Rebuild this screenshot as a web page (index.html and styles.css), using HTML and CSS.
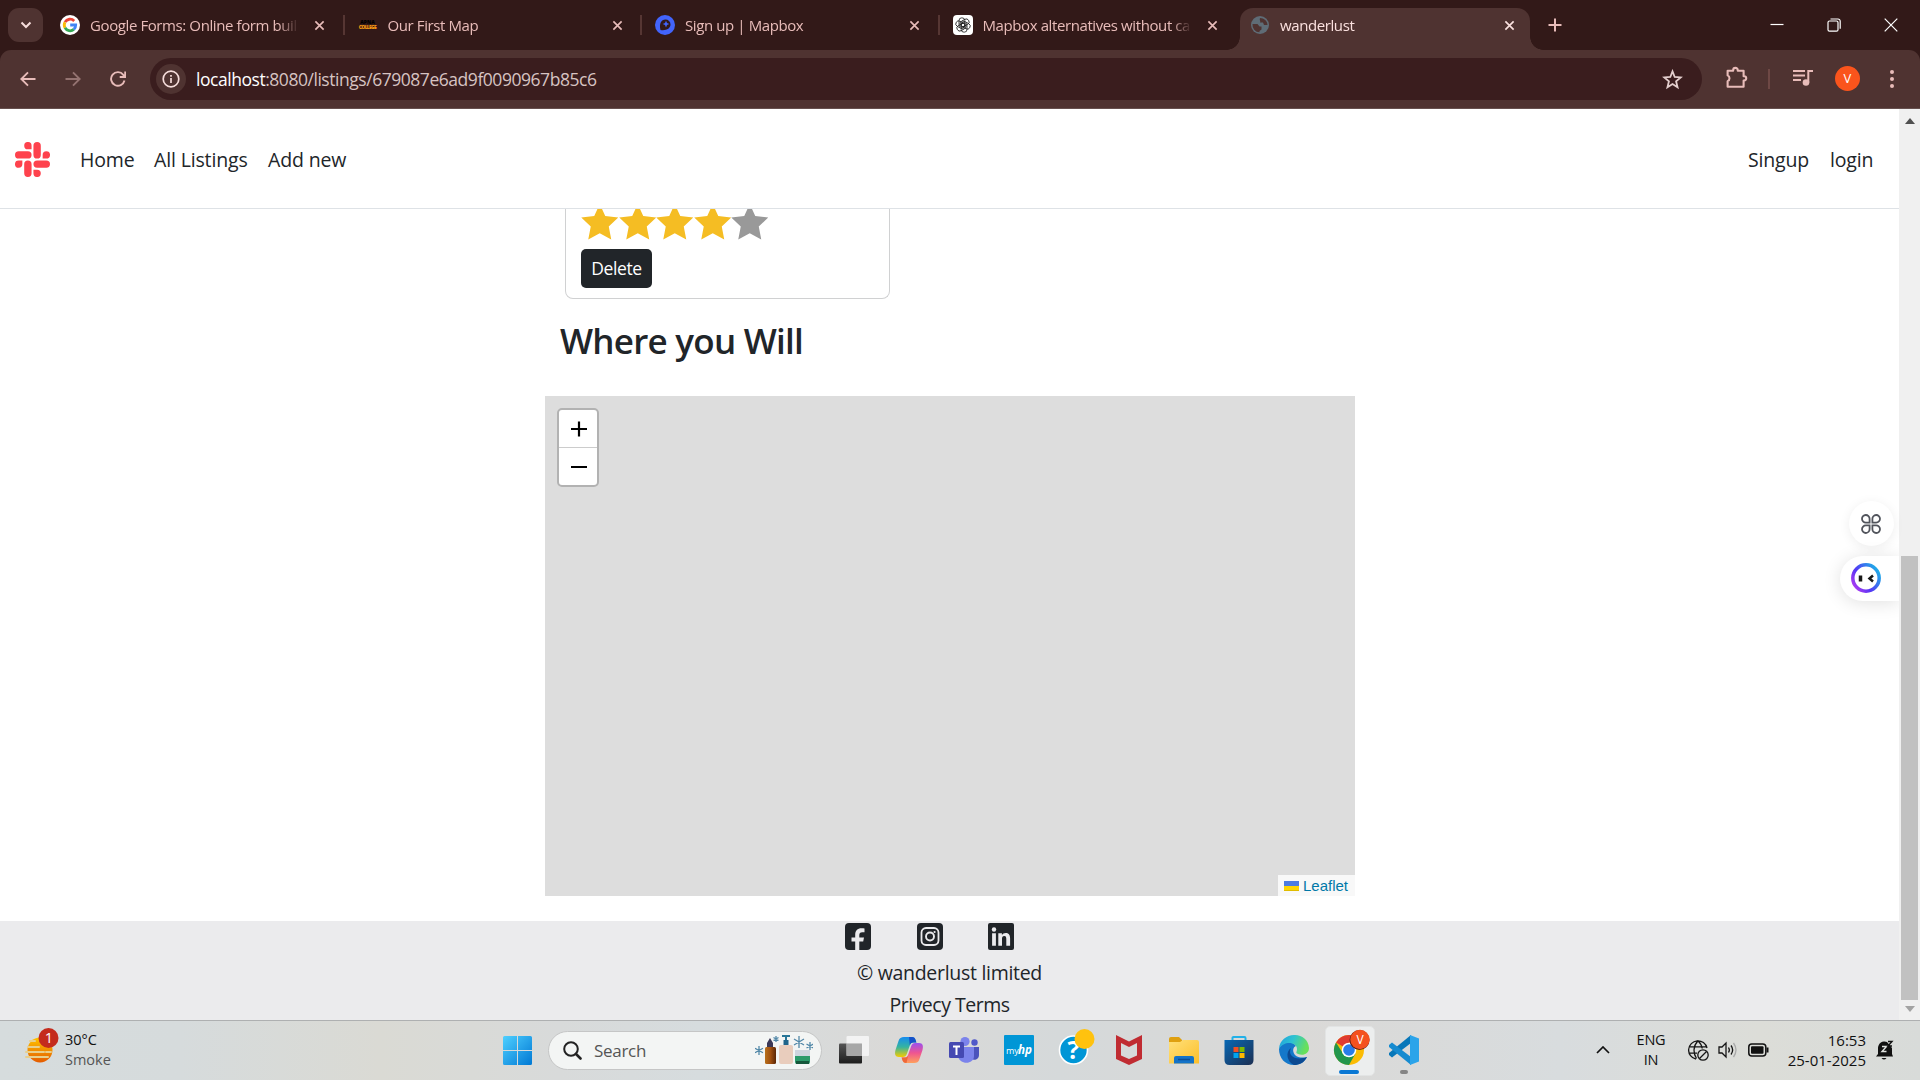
FILE: index.html
```html
<!DOCTYPE html>
<html lang="en">
<head>
<meta charset="utf-8">
<title>wanderlust</title>
<link rel="stylesheet" href="styles.css">
</head>
<body>
<svg width="0" height="0" class="defs">
  <defs>
    <symbol id="x" viewBox="0 0 12 12"><path d="M1.5 1.5l9 9M10.5 1.5l-9 9" fill="none" stroke="currentColor" stroke-width="1.8"/></symbol>
    <symbol id="star" viewBox="0 0 37 36"><path d="M18.5 0l5.5 12 13 1.5-9.500 9 2.500 13-11.500-6.300-11.500 6.300 2.500-13L0 13.500 13 12z" fill="currentColor"/></symbol>
    <linearGradient id="win" x1="0" y1="0" x2="1" y2="1"><stop offset="0" stop-color="#4fd0ff"/><stop offset="1" stop-color="#0078d4"/></linearGradient>
    <linearGradient id="sun" x1="0" y1="0" x2="0" y2="1"><stop offset="0" stop-color="#ffc400"/><stop offset="1" stop-color="#e45b00"/></linearGradient>
    <linearGradient id="ring" x1="0" y1="1" x2="1" y2="0.300"><stop offset="0" stop-color="#c43cf0"/><stop offset="0.450" stop-color="#5636f5"/><stop offset="1" stop-color="#20a8e8"/></linearGradient>
    <linearGradient id="cop1" x1="0" y1="0" x2="0" y2="1"><stop offset="0" stop-color="#168cf0"/><stop offset="0.500" stop-color="#35b4a0"/><stop offset="1" stop-color="#f5cc00"/></linearGradient>
    <linearGradient id="cop2" x1="0" y1="0" x2="0" y2="1"><stop offset="0" stop-color="#9b50ef"/><stop offset="0.500" stop-color="#ef5590"/><stop offset="1" stop-color="#ffa05c"/></linearGradient>
    <linearGradient id="fold" x1="0" y1="0" x2="1" y2="1"><stop offset="0" stop-color="#ffe07a"/><stop offset="1" stop-color="#fcbf2a"/></linearGradient>
    <linearGradient id="store" x1="0" y1="0" x2="1" y2="1"><stop offset="0" stop-color="#0868b4"/><stop offset="1" stop-color="#1c2f52"/></linearGradient>
    <linearGradient id="edge" x1="0" y1="0" x2="1" y2="0.300"><stop offset="0" stop-color="#1fa0e0"/><stop offset="0.500" stop-color="#2fc3d0"/><stop offset="1" stop-color="#68e05a"/></linearGradient>
    <linearGradient id="amber" x1="0" y1="0" x2="1" y2="0"><stop offset="0" stop-color="#b8701c"/><stop offset="0.500" stop-color="#a05010"/><stop offset="1" stop-color="#5a2606"/></linearGradient>
    <linearGradient id="dark" x1="0" y1="0" x2="0" y2="1"><stop offset="0" stop-color="#555"/><stop offset="1" stop-color="#1c1c1c"/></linearGradient>
  </defs>
</svg>

<header class="browser">
  <div class="tabs">
    <button class="tab-search"><svg width="12" height="8" viewBox="0 0 12 8"><path d="M1.500 1.500L6 6l4.500-4.500" fill="none" stroke="currentColor" stroke-width="2"/></svg></button>
    <div class="tab first">
      <svg class="fav" viewBox="0 0 20 20"><circle cx="10" cy="10" r="10" fill="#fff"/><g fill="none" stroke-width="2.800"><path d="M14.200 5.900A5.800 5.800 0 0 0 5 7.200" stroke="#ea4335"/><path d="M5 7.200a5.800 5.800 0 0 0 0 5.600" stroke="#fbbc05"/><path d="M5 12.800a5.800 5.800 0 0 0 8.800 1.600" stroke="#34a853"/><path d="M13.800 14.400A5.800 5.800 0 0 0 15.700 10H10.200" stroke="#4285f4"/></g></svg>
      <span class="tab-title">Google Forms: Online form buil</span>
      <svg class="close"><use href="#x"/></svg>
    </div>
    <div class="tab">
      <span class="fav apna"><b>APNA</b><i>COLLEGE</i></span>
      <span class="tab-title">Our First Map</span>
      <svg class="close"><use href="#x"/></svg>
    </div>
    <div class="tab">
      <svg class="fav" viewBox="0 0 20 20"><circle cx="10" cy="10" r="10" fill="#4264fb"/><path d="M5.500 15C4 9 6 4.500 10.500 4.500a5 5 0 0 1 5 5C15.500 13.500 11 16 5.500 15z" fill="#321918"/><path d="M11 5.800l1 2.300 2.300 1-2.300 1-1 2.300-1-2.300-2.300-1 2.300-1z" fill="#4264fb"/></svg>
      <span class="tab-title">Sign up | Mapbox</span>
      <svg class="close"><use href="#x"/></svg>
    </div>
    <div class="tab last">
      <svg class="fav" viewBox="0 0 20 20"><rect width="20" height="20" rx="4" fill="#fff"/><g fill="none" stroke="#222" stroke-width=".85"><rect x="6" y="2.800" width="5.800" height="9.500" rx="2.800"/><rect x="6" y="2.800" width="5.800" height="9.500" rx="2.800" transform="rotate(60 10 10)"/><rect x="6" y="2.800" width="5.800" height="9.500" rx="2.800" transform="rotate(120 10 10)"/><rect x="6" y="2.800" width="5.800" height="9.500" rx="2.800" transform="rotate(180 10 10)"/><rect x="6" y="2.800" width="5.800" height="9.500" rx="2.800" transform="rotate(240 10 10)"/><rect x="6" y="2.800" width="5.800" height="9.500" rx="2.800" transform="rotate(300 10 10)"/></g></svg>
      <span class="tab-title">Mapbox alternatives without ca</span>
      <svg class="close"><use href="#x"/></svg>
    </div>
    <div class="tab active">
      <svg class="fav" viewBox="0 0 20 20"><circle cx="10" cy="10" r="9" fill="#5f6c76"/><path d="M2.500 9h5l2 2.500h2v3l-2 1.500v1.300A7.500 7.500 0 0 1 2.500 9zM10 3c-1 2 1 3 0 4.500h3l1 2.500h3.500C17.500 6 14 3 10 3z" fill="#4f3331"/></svg>
      <span class="tab-title">wanderlust</span>
      <svg class="close"><use href="#x"/></svg>
    </div>
    <svg class="new-tab" viewBox="0 0 14 14"><path d="M7 0.500v13M.5 7h13" fill="none" stroke="currentColor" stroke-width="2"/></svg>
    <div class="window-controls">
      <svg width="14" height="14" viewBox="0 0 14 14"><path d="M.5 6.500h13" stroke="#fff" stroke-width="1.200"/></svg>
      <svg width="14" height="14" viewBox="0 0 14 14" fill="none" stroke="#fff" stroke-width="1.200"><rect x="1" y="3" width="10" height="10.200" rx="1.500"/><path d="M3.500 1H11a2.200 2.200 0 0 1 2.200 2.200v7.500"/></svg>
      <svg width="14" height="14" viewBox="0 0 14 14"><path d="M.7.700l12.600 12.600M13.300.700L.7 13.300" stroke="#fff" stroke-width="1.200"/></svg>
    </div>
  </div>
  <div class="toolbar">
    <svg class="nav-icon" viewBox="0 0 16 16"><path d="M15.500 8H1.500M8 1.300L1.300 8 8 14.700" fill="none" stroke="currentColor" stroke-width="1.900"/></svg>
    <svg class="nav-icon off" viewBox="0 0 16 16"><path d="M.5 8h14M8 1.300L14.700 8 8 14.700" fill="none" stroke="currentColor" stroke-width="1.900"/></svg>
    <svg class="nav-icon" viewBox="0 0 16 16"><path d="M14.500 9.500A6.800 6.800 0 1 1 13.300 3.800L15 5.800M15.200.500v5.500H9.700" fill="none" stroke="currentColor" stroke-width="1.900"/></svg>
    <div class="omnibox">
      <span class="site-info"><svg width="18" height="18" viewBox="0 0 18 18"><circle cx="9" cy="9" r="7.800" fill="none" stroke="currentColor" stroke-width="1.700"/><path d="M9 8v5M9 5v1.800" stroke="currentColor" stroke-width="1.700"/></svg></span>
      <span class="url"><b>localhost</b>:8080/listings/679087e6ad9f0090967b85c6</span>
      <svg class="bookmark" viewBox="0 0 20 20"><path d="M10 2.200l2.100 5.400 5.700.400-4.400 3.700 1.400 5.700-4.800-3.100-4.800 3.100 1.400-5.700L2.200 8l5.700-.400z" fill="none" stroke="currentColor" stroke-width="1.700"/></svg>
    </div>
    <svg class="extension" viewBox="0 0 22 22"><path d="M2.500 4.500h5.300V4a2.200 2.200 0 0 1 4.400 0v.5h5.600v5.300h.5a2 2 0 0 1 0 4h-.5v6H2.500v-5.300a3 3 0 0 0 0-5.500z" fill="none" stroke="currentColor" stroke-width="2" stroke-linejoin="round"/></svg>
    <span class="divider"></span>
    <svg class="media" viewBox="0 0 20 18"><path d="M0 2h12M0 6.500h12M0 11h8" stroke="currentColor" stroke-width="1.900"/><circle cx="13" cy="13.500" r="3.300" fill="currentColor"/><path d="M15.300 13.500V2H20" fill="none" stroke="currentColor" stroke-width="2"/></svg>
    <span class="avatar">V</span>
    <svg class="menu" viewBox="0 0 4 18" fill="currentColor"><circle cx="2" cy="2" r="2"/><circle cx="2" cy="9" r="2"/><circle cx="2" cy="16" r="2"/></svg>
  </div>
</header>

<main class="viewport">
  <div class="page">
    <nav class="navbar">
      <svg class="brand" viewBox="0 0 448 448" fill="#fe424d"><path d="M94.100 283.100a47.100 47.100 0 1 1-47-47.100h47zM117.800 283.100a47.100 47.100 0 0 1 94.200 0v117.800a47.100 47.100 0 0 1-94.200 0zM164.900 94.100a47.100 47.100 0 1 1 47.100-47v47zM164.900 117.800a47.100 47.100 0 0 1 0 94.200H47.100a47.100 47.100 0 0 1 0-94.200zM353.900 164.900a47.100 47.100 0 1 1 47 47.100h-47zM330.200 164.900a47.100 47.100 0 0 1-94.200 0V47.100a47.100 47.100 0 0 1 94.200 0zM283.100 353.900a47.100 47.100 0 1 1-47.100 47v-47zM283.100 330.200a47.100 47.100 0 0 1 0-94.200h117.800a47.100 47.100 0 0 1 0 94.200z"/></svg>
      <a class="n1">Home</a><a class="n2">All Listings</a><a class="n3">Add new</a>
      <a class="n4">Singup</a><a class="n5">login</a>
    </nav>
    <section class="content">
      <div class="review">
        <div class="stars"><svg><use href="#star"/></svg><svg><use href="#star"/></svg><svg><use href="#star"/></svg><svg><use href="#star"/></svg><svg class="empty"><use href="#star"/></svg></div>
        <button class="delete"><span>Delete</span></button>
      </div>
      <h3><span>Where you Will</span></h3>
      <div class="map">
        <div class="zoom">
          <a><svg width="16" height="16" viewBox="0 0 16 16"><path d="M0 8h16M8 0.500v15" stroke="#000" stroke-width="2.200"/></svg></a>
          <a><svg width="16" height="16" viewBox="0 0 16 16"><path d="M0 8h16" stroke="#000" stroke-width="2"/></svg></a>
        </div>
        <div class="attribution"><svg width="15" height="10" viewBox="0 0 15 10"><path fill="#4c7be1" d="M0 0h15v5H0z"/><path fill="#ffd500" d="M0 5h15v4H0z"/><path fill="#e0bc00" d="M0 9h15v1H0z"/></svg><span>Leaflet</span></div>
      </div>
    </section>
    <footer class="footer">
      <div class="social">
        <svg viewBox="0 0 26 27"><rect width="26" height="27" rx="4" fill="#212529"/><path d="M10.200 27v-8.500H6.500v-4h3.700v-2.300c0-4.700 2.200-6.900 6.300-6.900 1.200 0 2.300.100 3 .300v3.600h-2.200c-2.200 0-3 .900-3 3v2.300h4.700l-.8 4h-3.900V27z" fill="#ebebed"/></svg>
        <svg viewBox="0 0 26 27"><rect width="26" height="27" rx="4" fill="#212529"/><rect x="4.500" y="5" width="17" height="17" rx="4.500" fill="none" stroke="#ebebed" stroke-width="1.800"/><circle cx="13" cy="13.500" r="4" fill="none" stroke="#ebebed" stroke-width="1.900"/><circle cx="17.600" cy="9" r="1.100" fill="#ebebed"/></svg>
        <svg viewBox="0 0 26 27"><rect width="26" height="27" rx="2" fill="#212529"/><circle cx="6" cy="6.500" r="2.200" fill="#ebebed"/><path d="M4.100 10.300h3.800v12.500H4.100zM10.300 10.300h3.600V12c.8-1.300 2.100-2 3.800-2 3.700 0 4.400 2.500 4.400 5.600v7.200h-3.800v-6.400c0-1.500-.1-3.300-2-3.300-2.100 0-2.300 1.600-2.300 3.200v6.500h-3.700z" fill="#ebebed"/></svg>
      </div>
      <p class="f1"><span>© wanderlust limited</span></p>
      <p class="f2"><span>Privecy Terms</span></p>
    </footer>
    <div class="clover"><svg width="20" height="20" viewBox="0 0 20 20" fill="none" stroke="#51545c" stroke-width="1.800"><path d="M8.600 8.600H5a3.800 3.800 0 1 1 3.600-3.800zM11.400 8.600V5a3.800 3.800 0 1 1 3.800 3.600zM8.600 11.400V15a3.800 3.800 0 1 1-3.800-3.600zM11.400 11.400H15a3.800 3.800 0 1 1-3.600 3.800z"/></svg></div>
    <div class="bot"><svg width="30" height="30" viewBox="0 0 30 30"><circle cx="15" cy="15" r="13.200" fill="#fff" stroke="url(#ring)" stroke-width="3.500"/><path d="M9.500 12.500v6" stroke="#181818" stroke-width="3.500"/><path d="M22 12.500l-3.500 3 3.500 3" fill="none" stroke="#181818" stroke-width="2.500"/></svg></div>
  </div>
  <div class="scrollbar"><svg width="10" height="6" viewBox="0 0 10 6"><path d="M5 0l5 6H0z" fill="#505050"/></svg><div class="thumb"></div><svg width="10" height="6" viewBox="0 0 10 6"><path d="M5 6l5-6H0z" fill="#a3a3a3"/></svg></div>
</main>

<footer class="taskbar">
  <div class="weather">
    <svg width="36" height="36" viewBox="0 0 36 36"><circle cx="16" cy="22" r="12.500" fill="url(#sun)"/><g stroke="#e8cf8c" stroke-width="2" stroke-linecap="round"><path d="M6 13h5M4 19h11M2 24h18M22 24h5M2 29h22"/></g><circle cx="24.500" cy="10" r="10" fill="#c42b1c"/><text x="25" y="15.300" text-anchor="middle" font-size="14.500" fill="#fff">1</text></svg>
    <div><span class="w1">30°C</span><span class="w2">Smoke</span></div>
  </div>
  <svg class="start" viewBox="0 0 29 29"><path d="M0 1.500Q0 0 1.500 0H14v14H0zM15 0h12.500Q29 0 29 1.500V14H15zM0 15h14v14H1.500Q0 29 0 27.500zM15 15h14v12.500q0 1.500-1.500 1.500H15z" fill="url(#win)"/></svg>
  <div class="search">
    <svg width="19" height="19" viewBox="0 0 19 19"><circle cx="8" cy="8" r="6.800" fill="none" stroke="#222" stroke-width="2"/><path d="M13 13l4.500 4.500" stroke="#222" stroke-width="2.600" stroke-linecap="round"/></svg>
    <span>Search</span>
    <svg class="art" width="58" height="30" viewBox="0 0 58 30"><g stroke="#5288a8" stroke-width="1.300"><path d="M4 11v9M0 13.300l8 4.500M0 17.800l8-4.500M21 1v6M18.500 2.500l5 3M18.500 5.500l5-3M44 1v12M39 4l10 6M39 10l10-6M55 7v8M51.500 9l7 4M51.500 13l7-4"/></g><path d="M15 3l3 5v4h-6V8z" fill="#3b3856"/><rect x="10" y="12" width="11" height="17" rx="1.500" fill="url(#amber)"/><path d="M27 1h8M31 1v4" stroke="#287698" stroke-width="2"/><path d="M28.500 5h5v5h-5z" fill="#20658b"/><rect x="24" y="10" width="14" height="19" rx="2" fill="#e9cdbd"/><rect x="40" y="15" width="15" height="14" rx="2" fill="#2d9a6b"/><path d="M40 15h15v6H40z" fill="#cfd5df"/><path d="M41 26h13v3H41z" fill="#15573b"/></svg>
  </div>
  <div class="apps">
    <svg viewBox="0 0 30 30"><rect y="8.500" width="23" height="20" rx="1" fill="url(#dark)"/><rect x="7.500" y="1" width="22.500" height="20" rx="1" fill="#f6f6f6" opacity=".88"/><path d="M7.500 8.500H23V21H7.500z" fill="#999" opacity=".8"/></svg>
    <svg viewBox="0 0 30 30"><path d="M10 2h8c2 0 3 1 3.600 3l.8 2.500h-3c-2 0-3 1-3.600 3l-3 8.500c-.8 2-1.800 3-3.800 3H5C1 22 .5 19 1.500 15L4.500 6C5.500 3 7 2 10 2z" fill="url(#cop1)"/><path d="M20 28h-8c-2 0-3-1-3.600-3l-.8-2.500h3c2 0 3-1 3.600-3l3-8.500c.8-2 1.800-3 3.800-3h4c4 0 4.500 3 3.500 7l-3 9c-1 3-2.500 4-5.500 4z" fill="url(#cop2)"/><path d="M15 2h3c2 0 3 1 3.600 3l.8 2.500h-3c-2 0-3 1-3.600 3z" fill="#1652c8"/><path d="M7.600 22.500H11c1.500 0 2.500-.5 3.200-2L12.500 28C10 28 9 27 8.400 25z" fill="#ef6838"/></svg>
    <svg viewBox="0 0 30 30"><circle cx="16" cy="6.500" r="4.600" fill="#7b83eb"/><circle cx="25.500" cy="7.500" r="3.200" fill="#5059c9"/><path d="M21 12h9v8c0 4-4 6-8 4z" fill="#4b53bc"/><path d="M8 12h17v9c0 9-15 9-16 0z" fill="#7b83eb"/><rect y="7" width="15" height="16" rx="1.500" fill="#4549b2"/><path d="M4 11.500h7M7.500 11.500V20" stroke="#fff" stroke-width="2"/></svg>
    <svg viewBox="0 0 30 30"><rect width="30" height="30" rx="1" fill="#0096d6"/><text x="2" y="18.500" fill="#fff" font-size="9">my</text><text x="14" y="19" fill="#fff" font-size="13" font-weight="bold" font-style="italic" textLength="14" lengthAdjust="spacingAndGlyphs">hp</text></svg>
    <svg viewBox="0 0 30 30" overflow="visible"><circle cx="14.500" cy="15" r="14" fill="#0096d6" stroke="#fff" stroke-width="1.600"/><text x="14.500" y="24" fill="#fff" font-size="25" font-weight="bold" text-anchor="middle">?</text><circle cx="25.500" cy="4" r="10" fill="#ffc20e"/></svg>
    <svg viewBox="0 0 30 30"><path d="M2 0l13 6.500L28 0v24l-13 6-13-6zM7 8v12.500l8 3.500 8-3.500V8l-8 4z" fill="#c02c32" fill-rule="evenodd"/></svg>
    <svg viewBox="0 0 30 30"><path d="M0 4q0-2 2-2h8l3 3v6H0z" fill="#dfa010"/><path d="M0 7h11l3-2h14q2 0 2 2v21.500H0z" fill="url(#fold)"/><path d="M5 28.500V23q0-2 2-2h16q2 0 2 2v5.500z" fill="#1473c8"/><path d="M9 24.500h12" stroke="#0b4e96" stroke-width="1.500"/></svg>
    <svg viewBox="0 0 30 30"><path d="M8.500 6V2.500Q8.500 2 9.500 2h11q1 0 1 1V6" fill="none" stroke="#22b1e8" stroke-width="2"/><path d="M.5 5h29v20q0 5-5 5h-19q-5 0-5-5z" fill="url(#store)"/><path d="M9.500 12h5v5h-5z" fill="#f25022"/><path d="M15.500 12h5v5h-5z" fill="#7fba00"/><path d="M9.500 18h5v5h-5z" fill="#00a4ef"/><path d="M15.500 18h5v5h-5z" fill="#ffb900"/></svg>
    <svg viewBox="0 0 30 30"><path d="M0 14C2 6 14 5 17 11c-3 1-4 5-1 9 3 3 8 3 12 2C25 28 20 30 15 30 6 30 0 23 0 14z" fill="#1478ca"/><path d="M0 14C1-4 29-5 30 13c0 6-6 8-11 6-3-1-1-2-1-5C18 7 5 5 0 14z" fill="url(#edge)"/><path d="M12 13c-4 8 5 13 16 9-3 6-8 8-13 8C8 27 6 17 12 13z" fill="#0c4a92"/></svg>
    <span class="running active-app"><svg viewBox="0 0 30 30" overflow="visible"><circle cx="15" cy="15" r="15" fill="#fbbc04"/><path d="M15 15L2 7.500A15 15 0 0 1 28 7.500H15z" fill="#df3b30"/><path d="M2 7.500A15 15 0 0 0 15 30l6.500-11.500L15 15 9 18.500z" fill="#22964c"/><circle cx="15" cy="15" r="7.300" fill="#fff"/><circle cx="15" cy="15" r="5.800" fill="#2a7de9"/><circle cx="25.500" cy="5" r="10" fill="#5c1c14"/><circle cx="26" cy="4.500" r="9.700" fill="#f4511e"/><text x="26" y="9" fill="#fff" font-size="12" text-anchor="middle">V</text></svg></span>
    <span class="running"><svg viewBox="0 0 30 30"><path d="M22 0v8L3 22.500 0 20v-2z" fill="#0877b9"/><path d="M22 30v-8L3 7.500 0 10v2z" fill="#168bd0"/><path d="M21 0l9 3.500v23L21 30z" fill="#2ba4ea"/></svg></span>
  </div>
  <div class="tray">
    <svg class="chev" width="14" height="8" viewBox="0 0 14 8"><path d="M1 7l6-6 6 6" fill="none" stroke="#111" stroke-width="1.700"/></svg>
    <div class="lang"><span>ENG</span><span>IN</span></div>
    <svg width="21" height="21" viewBox="0 0 21 21" fill="none" stroke="#151515" stroke-width="1.300"><path d="M8 19.200A9.300 9.300 0 1 1 19 8M1.500 6.800h17M1.200 13.200H9M8.500 18.500C5 13 5 6 10 .700c3 3 4 5 4.200 7.800"/><circle cx="15" cy="15" r="5.200"/><path d="M11.500 18.500l7-7"/></svg>
    <svg class="spk" width="20" height="18" viewBox="0 0 20 18" fill="none" stroke="#151515" stroke-width="1.300"><path d="M1 6h3l4-4v14l-4-4H1z"/><path d="M10.500 6.500q1.700 2.500 0 5M13 4.500q3.300 4.500 0 9"/><path d="M15.500 2q5 7 0 14" stroke="#aaa"/></svg>
    <svg class="bat" width="21" height="14" viewBox="0 0 21 14"><rect x=".8" y="1" width="17" height="12" rx="3" fill="none" stroke="#111" stroke-width="1.500"/><rect x="3" y="3.200" width="12.500" height="7.600" rx="1" fill="#111"/><path d="M19.500 4.500v5" stroke="#111" stroke-width="2"/></svg>
    <div class="clock"><span>16:53</span><span>25-01-2025</span></div>
    <svg class="bell" width="18" height="20" viewBox="0 0 18 20"><path d="M2 14V8a6.500 6.500 0 0 1 9-6l5 6v6l1 2.500H0zM5.500 18h5q-2.500 3-5 0z" fill="#111"/><path d="M6 6.500h4.500L6 11.500h4.500" fill="none" stroke="#e0e2df" stroke-width="1.400"/><path d="M12 1.500h4L12 6h4" fill="none" stroke="#111" stroke-width="1.400"/></svg>
  </div>
</footer>
</body>
</html>
```
FILE: styles.css
```css
* { box-sizing: border-box; }
body {
  margin: 0; width: 1920px; height: 1080px; overflow: hidden;
  display: flex; flex-direction: column;
  font-family: "Open Sans", "Noto Sans", sans-serif; color: #212529;
}
svg { display: block; flex: none; }
span { white-space: nowrap; }
.defs { position: absolute; }
button { border: 0; padding: 0; font-family: inherit; }

/* browser chrome */
.browser { height: 109px; flex: none; background: #321918; color: #e8bcb9; }
.tabs { height: 50px; display: flex; align-items: center; padding-left: 8px; }
.tab-search { width: 35px; height: 34px; border-radius: 11px; background: #4f3331; color: #f6dddb; display: grid; place-items: center; }
.tab { width: 297.500px; height: 42px; display: flex; align-items: center; padding-left: 14px; position: relative; flex: none; }
.tab.first { margin-left: 3px; }
.tab:not(.active):not(.last)::after { content: ""; position: absolute; right: -1px; top: 11px; width: 2px; height: 20px; background: #563633; }
.fav { width: 20px; height: 20px; margin-right: 10px; flex: none; }
.tab-title { font-size: 15px; letter-spacing: -0.400px; line-height: 20px; width: 210px; flex: none; overflow: hidden; -webkit-mask-image: linear-gradient(to right, #000 188px, transparent 209px); }
.close { width: 11px; height: 11px; margin-left: 14px; }
.tab.active { width: 290px; margin: 8px 0 0 4px; height: 42px; background: #4f3331; border-radius: 13px 13px 0 0; padding: 0 0 8px 10px; color: #fbe1df; }
.tab.active::before, .tab.active::after { content: ""; position: absolute; bottom: 0; width: 13px; height: 13px; }
.tab.active::before { left: -13px; background: radial-gradient(circle at 0 0, #321918 12.500px, #4f3331 13px); }
.tab.active::after { right: -13px; background: radial-gradient(circle at 100% 0, #321918 12.500px, #4f3331 13px); }
.new-tab { width: 14px; height: 14px; margin-left: 18px; }
.window-controls { margin-left: auto; display: flex; gap: 43px; padding-right: 22px; }
.apna { display: flex; flex-direction: column; align-items: center; justify-content: center; font: 900 5px/5px "Open Sans", sans-serif; color: #000; }
.apna i { font-style: normal; font-size: 5px; letter-spacing: -0.700px; color: #f59a12; }

.toolbar { height: 59px; background: #4f3331; border-radius: 11px 11px 0 0; border-bottom: 1px solid #66504e; display: flex; align-items: center; padding-left: 20px; }
.nav-icon { width: 16px; height: 16px; margin-right: 29px; }
.nav-icon.off { color: #947371; }
.omnibox { width: 1552px; height: 42px; border-radius: 21px; background: #3a1d1e; display: flex; align-items: center; padding-left: 6px; margin-left: -5px; flex: none; }
.site-info { width: 30px; height: 30px; border-radius: 50%; background: #4f3331; display: grid; place-items: center; color: #f6dddb; margin-right: 10px; }
.url { font-size: 17.500px; letter-spacing: -0.460px; color: #d6c3c2; }
.url b { color: #fff; font-weight: 400; }
.bookmark { width: 21px; height: 21px; margin: 0 19px 0 auto; color: #e4cfce; }
.extension { width: 23px; height: 23px; margin: -4px 0 0 23px; }
.divider { width: 2px; height: 20px; background: #6e4845; margin-left: 20px; }
.media { width: 20px; height: 18px; margin: -2px 0 0 23px; }
.avatar { width: 25px; height: 25px; border-radius: 50%; background: #fa541c; color: #fff; font-size: 13px; line-height: 25px; text-align: center; margin: -1px 0 0 22px; }
.menu { width: 4px; height: 18px; margin-left: 30px; }

/* web page */
.viewport { height: 911px; flex: none; display: flex; background: #fff; }
.page { width: 1899px; display: flex; flex-direction: column; position: relative; }
.navbar { height: 100px; flex: none; border-bottom: 1px solid #dee2e6; display: flex; align-items: center; padding-left: 15px; font-size: 19.500px; letter-spacing: -0.150px; }
.navbar a { white-space: nowrap; margin-top: 1px; }
.brand { width: 35px; height: 35px; margin: 2px 30px 0 0; }
.n1 { width: 74px; } .n2 { width: 114px; } .n4 { margin-left: auto; width: 82px; } .n5 { width: 69px; }
.content { width: 810px; margin-left: 545px; }
.review { width: 325px; height: 90px; margin-left: 20px; border: 1px solid #d0d1d2; border-top: 0; border-radius: 0 0 8px 8px; padding-left: 15px; overflow: hidden; }
.stars { display: flex; color: #f5bd23; height: 40px; }
.stars svg { width: 37.500px; height: 36px; margin-top: -5px; }
.stars .empty { color: #999; }
.delete { width: 71px; height: 39px; border-radius: 5px; background: #212529; color: #fff; font-size: 17.500px; letter-spacing: -0.400px; padding-bottom: 1px; }
h3 { margin: 21px 0 0 15px; height: 76px; font-size: 35px; line-height: 42px; font-weight: 600; letter-spacing: -0.750px; }
.map { height: 500px; background: #ddd; display: flex; flex-direction: column; justify-content: space-between; padding-top: 12px; }
.zoom { margin-left: 12px; width: 42px; height: 79px; border: 2px solid #b2b2b2; border-radius: 5px; background: #fff; }
.zoom a { height: 38px; display: grid; place-items: center; padding-left: 1px; }
.zoom a:first-child { border-bottom: 1px solid #ccc; }
.attribution { align-self: flex-end; width: 77px; height: 21px; background: #f8f8f8; display: flex; align-items: center; gap: 4px; padding-left: 6px; color: #0078a8; font: 15px/21px "Liberation Sans", sans-serif; }
.footer { margin-top: 25px; height: 99px; background: #ebebed; text-align: center; padding-top: 2px; font-size: 19.500px; }
.social { display: flex; gap: 45.500px; margin-left: 845px; }
.social svg { width: 26px; height: 27px; }
.footer p { margin: 0; line-height: 32px; height: 32px; }
.footer .f1 { margin-top: 7px; letter-spacing: -0.300px; }
.footer .f2 { letter-spacing: -0.500px; }
.clover, .bot { position: absolute; background: #fff; display: flex; align-items: center; box-shadow: 0 2px 18px rgba(0,0,0,.12); }
.clover { left: 1849px; top: 392px; width: 45px; height: 45px; border-radius: 50%; padding-left: 12px; box-shadow: 0 2px 12px rgba(0,0,0,.07); }
.bot { left: 1840px; top: 447px; width: 59px; height: 45px; border-radius: 23px 0 0 23px; padding: 0 0 1px 11px; clip-path: inset(-30px 0 -30px -30px); }
.scrollbar { width: 21px; background: #f0f0f0; display: flex; flex-direction: column; align-items: center; padding: 9px 0 8px; }
.thumb { width: 17px; height: 444px; background: #c1c1c1; margin: auto 0 6px; }

/* taskbar */
.taskbar { height: 60px; flex: none; border-top: 1px solid #aeb0b1; padding-bottom: 1px; display: flex; align-items: center; background: linear-gradient(to right, #d6dcdd 0, #d6dbdc 180px, #dadad4 380px, #d8dada 560px, #d6dcde 700px, #dad9d7 900px, #d5d9da 1060px, #dad9d7 1300px, #d8dcde 1560px, #dcddd8 1760px, #d8dbd9 1920px); }
.weather { width: 503px; display: flex; gap: 5px; padding-left: 24px; }
.weather > svg { margin-top: -2px; width: 36px; }
.weather div, .lang, .clock { display: flex; flex-direction: column; font-size: 14.500px; line-height: 20px; color: #111; }
.weather .w2 { color: #555; }
.start { width: 29px; height: 29px; }
.search { width: 274px; height: 39px; margin-left: 16px; border: 1px solid #c5c6c6; border-radius: 20px; background: #f3f5f4; display: flex; align-items: center; padding-left: 14px; color: #555; font-size: 17px; letter-spacing: -0.300px; flex: none; }
.search span { margin-left: 12px; }
.art { margin: 0 8px 0 auto; }
.apps { display: flex; align-items: center; gap: 25px; margin-left: 16.500px; }
.apps svg { width: 30px; height: 30px; }
.running { position: relative; width: 30px; }
.running::after { content: ""; position: absolute; left: 11px; bottom: -9px; width: 8px; height: 4px; border-radius: 2px; background: #858585; }
.active-app::before { content: ""; position: absolute; left: -9px; top: -9px; width: 48px; height: 48px; border-radius: 5px; background: #eceeee; border: 1px solid #e2e4e4; }
.active-app svg { position: relative; }
.active-app::after { left: 5px; width: 20px; background: #0a78d4; }
.tray { margin-left: auto; display: flex; align-items: center; padding-right: 26px; }
.lang { text-align: center; width: 30px; margin: 0 22px 0 26px; }
.lang span { letter-spacing: -0.200px; }
.spk { margin-left: 9px; }
.bat { margin-left: 10px; }
.clock { width: 97px; text-align: right; margin-right: 10px; font-size: 15px; }
```
